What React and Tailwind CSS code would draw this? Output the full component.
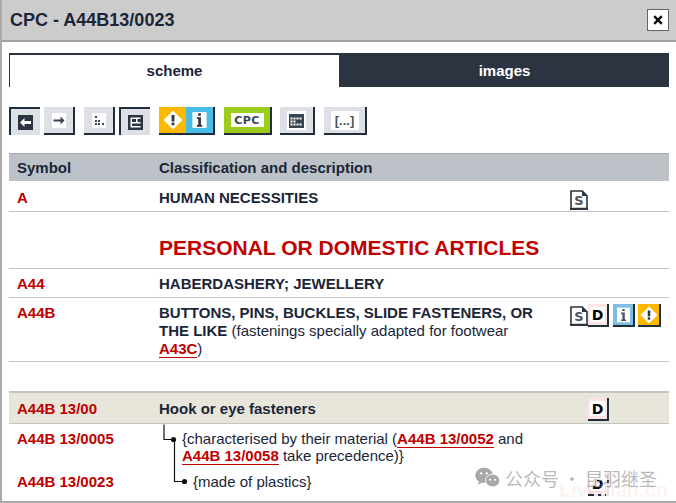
const font = { fontFamily: '"Liberation Sans", Arial, sans-serif' };

const ToolButton = ({ active, className = "", children }) => (
  <div
    className={`flex items-center justify-center h-[28px] bg-[#dde0e4] border-[#1f2d3d] ${
      active ? "border-t-2 border-l-2" : "border-b-2 border-r-2"
    } ${className}`}
  >
    {children}
  </div>
);

const Warn = ({ size = 20 }) => (
  <svg width={size} height={size} viewBox="0 0 20 20">
    <path d="M10 0.5 L19.5 10 L10 19.5 L0.5 10 Z" fill="#fff" />
    <rect x="8.6" y="5" width="2.8" height="6.5" fill="#2b3440" />
    <rect x="8.6" y="12.6" width="2.8" height="2.6" fill="#2b3440" />
  </svg>
);

const InfoGlyph = ({ w = 15, h = 16, fill = "#2b3440" }) => (
  <svg width={w} height={h} viewBox="0 0 16 18">
    <rect width="16" height="18" fill="#fff" />
    <path d="M6.5 1.5h3v2.6h-3zM5 6h4.6v8.5H11v2H5v-2h1.6V8H5z" fill={fill} />
  </svg>
);

const DocS = () => (
  <svg width="18" height="20" viewBox="0 0 18 20" className="block">
    <path d="M1 1h11l5 5v12.5H1z" fill="#fff" stroke="#2b3440" strokeWidth="1.6" />
    <path d="M12 0l6 6h-6z" fill="#2b3440" />
    <rect x="0" y="18" width="18" height="2" fill="#2b3440" />
    <text x="9" y="15" textAnchor="middle" fontSize="13" fontWeight="700" fill="#4a5560" style={{ fontFamily: '"DejaVu Sans", sans-serif' }}>S</text>
  </svg>
);

const DocD = ({ className = "" }) => (
  <div className={`flex items-center justify-center w-[21px] h-[23px] bg-[#fde3e3] border-b-2 border-r-2 border-[#1f2d3d] ${className}`}>
    <div className="flex items-center justify-center w-[15px] h-[15px] bg-white text-[14px] font-bold text-black leading-none" style={{ fontFamily: '"DejaVu Sans", sans-serif' }}>D</div>
  </div>
);

const SmallInfo = () => (
  <div className="flex items-center justify-center w-[22px] h-[23px] bg-[#7dbfe0] border-b-2 border-r-2 border-[#1f2d3d]">
    <InfoGlyph w={13} h={16} fill="#4a5560" />
  </div>
);

const SmallWarn = () => (
  <div className="flex items-center justify-center w-[23px] h-[23px] bg-[#ffb800] border-b-2 border-r-2 border-[#1f2d3d]">
    <Warn size={18} />
  </div>
);

const Row = ({ symbol, className = "", icons, iconsClass = "", children }) => (
  <div className={`flex border-b border-[#c4c4c4] ${className}`}>
    <div className="w-[150px] shrink-0 pl-[8px] font-bold text-[#c00000]">{symbol}</div>
    <div className="w-[411px] shrink-0 text-[#1a2638]">{children}</div>
    <div className={`flex-1 flex items-start ${iconsClass}`}>{icons}</div>
  </div>
);

const Ref = ({ children }) => (
  <a className="font-bold text-[#c00000] border-b border-[#c00000]">{children}</a>
);

export default function App() {
  return (
    <div className="relative w-[676px] h-[503px] overflow-hidden bg-white border-l-2 border-b-2 border-[#aaaaaa] text-[15px] leading-[17px]" style={font}>
      {/* title bar */}
      <div className="flex items-center justify-between h-[42px] -ml-[2px] pl-[8px] pr-[7px] bg-[#cccccc] border-b-2 border-l-2 border-[#a0a0a0]">
        <h1 className="text-[18px] font-bold text-[#1a2638]">CPC - A44B13/0023</h1>
        <div className="flex items-center justify-center w-[22px] h-[22px] bg-white border border-[#666]">
          <svg width="10" height="10" viewBox="0 0 10 10">
            <path d="M1.2 1.2l7.6 7.6M8.8 1.2l-7.6 7.6" stroke="#111" strokeWidth="2.4" />
          </svg>
        </div>
      </div>

      <div className="pl-[7px] pr-[7px]">
        {/* tabs */}
        <div className="flex mt-[11px] h-[34px] font-bold">
          <div className="flex-1 flex items-center justify-center bg-white border-t-2 border-x border-[#2b3440] text-[#1a2638] pb-[2px]">scheme</div>
          <div className="flex-1 flex items-center justify-center bg-[#2b3440] text-white">images</div>
        </div>

        {/* toolbar */}
        <div className="flex mt-[20px] h-[28px]">
          <ToolButton active className="w-[31px]">
            <svg width="15" height="15" viewBox="0 0 15 15">
              <rect width="15" height="15" fill="#2b3440" />
              <path d="M2 7.500l4.500-4.500v3h6.500v3H6.500v3z" fill="#fff" />
            </svg>
          </ToolButton>
          <ToolButton className="w-[31px] ml-[4px]">
            <svg width="14" height="15" viewBox="0 0 14 15">
              <rect width="14" height="15" fill="#fff" />
              <path d="M1.500 6.500h7V3.500l4 4-4 4V8.500h-7z" fill="#3a4552" />
            </svg>
          </ToolButton>
          <ToolButton className="w-[31px] ml-[9px]">
            <svg width="14" height="15" viewBox="0 0 14 15">
              <rect width="14" height="15" fill="#fff" />
              <path d="M3 3h2v2H3zM3 7h2v2H3zM6 7h2v2H6zM3 10h2v2H3zM6 10h2v2H6zM10 10h2v2h-2z" fill="#3a4552" />
            </svg>
          </ToolButton>
          <ToolButton active className="w-[31px] ml-[4px]">
            <svg width="15" height="15" viewBox="0 0 15 15">
              <rect width="15" height="15" fill="#2b3440" />
              <path d="M2.500 2.500h10v1.500H4V7h8.500v1.500H4V11h8.500v1.500h-10z" fill="#fff" />
              <rect x="8" y="4" width="1.500" height="3" fill="#fff" />
            </svg>
          </ToolButton>
          <div className="flex ml-[9px] w-[56px] h-[28px] border-b-2 border-r-2 border-[#1f2d3d]">
            <div className="flex items-center justify-center w-[27px] bg-[#ffb800]"><Warn /></div>
            <div className="flex items-center justify-center flex-1 bg-[#47bde6]"><InfoGlyph /></div>
          </div>
          <div className="flex items-center justify-center ml-[9px] w-[48px] h-[28px] bg-[#9ccc1c] border-b-2 border-r-2 border-[#1f2d3d]">
            <div className="flex items-center justify-center w-[33px] h-[14px] bg-white text-[11px] font-bold text-[#3a4552] tracking-[0.5px]" style={{ fontFamily: '"DejaVu Sans", sans-serif' }}>CPC</div>
          </div>
          <ToolButton className="w-[35px] ml-[8px]">
            <svg width="19" height="19" viewBox="0 0 19 19">
              <rect width="19" height="19" fill="#fff" />
              <rect x="2" y="3" width="15" height="14" fill="#3a4552" />
              <path d="M3.500 6.500h2v2h-2zM6.500 6.500h2v2h-2zM9.500 6.500h2v2h-2zM12.500 6.500h2v2h-2zM3.500 9.500h2v2h-2zM6.500 9.500h2v2h-2zM3.500 12.500h2v2h-2zM6.500 12.500h2v2h-2zM9.500 12.500h2v2h-2zM12.500 12.500h2v2h-2z" fill="#fff" />
            </svg>
          </ToolButton>
          <ToolButton className="w-[43px] ml-[9px]">
            <div className="flex items-center justify-center w-[28px] h-[19px] bg-white font-bold text-[13px] text-[#4a5560]">[...]</div>
          </ToolButton>
        </div>

        {/* table */}
        <div className="mt-[18px]">
          <div className="flex items-center h-[28px] pb-[1px] bg-[#bcc2c7] border-t border-[#a5a9ad] font-bold text-[#1a2638]">
            <div className="w-[150px] pl-[8px]">Symbol</div>
            <div>Classification and description</div>
          </div>

          <Row symbol="A" className="h-[31px] pt-[8px]" iconsClass="pt-[1px]" icons={<DocS />}>
            <span className="font-bold">HUMAN NECESSITIES</span>
          </Row>

          <Row className="h-[57px] pt-[24px]">
            <span className="text-[21px] leading-[23px] font-bold text-[#c00000] whitespace-nowrap">PERSONAL OR DOMESTIC ARTICLES</span>
          </Row>

          <Row symbol="A44" className="h-[29px] pt-[6px]">
            <span className="font-bold">HABERDASHERY; JEWELLERY</span>
          </Row>

          <Row
            symbol="A44B"
            className="h-[64px] pt-[6px]"
            icons={
              <>
                <div className="mt-[2px]"><DocS /></div>
                <DocD />
                <div className="ml-[4px] flex gap-[3px]">
                  <SmallInfo />
                  <SmallWarn />
                </div>
              </>
            }
          >
            <div className="leading-[18px] w-[385px]">
              <span className="font-bold">BUTTONS, PINS, BUCKLES, SLIDE FASTENERS, OR THE LIKE</span> (fastenings specially adapted for footwear <Ref>A43C</Ref>)
            </div>
          </Row>

          <div className="h-[31px] border-b-2 border-[#c4c4c4]" />

          <Row symbol="A44B 13/00" className="h-[31px] pt-[7px] bg-[#e8e6da]" iconsClass="pl-[18px] -mt-[2px]" icons={<DocD />}>
            <span className="font-bold">Hook or eye fasteners</span>
          </Row>

          <div className="relative flex h-[78px] text-[#1a2638]">
            <div className="w-[150px] pl-[8px] pt-[6px] font-bold text-[#c00000]">
              <div>A44B 13/0005</div>
              <div className="mt-[26px]">A44B 13/0023</div>
            </div>
            <div className="relative flex-1 pt-[6px] pl-[23px]">
              <div className="w-[360px]">
                {"{"}characterised by their material (<Ref>A44B 13/0052</Ref> and <Ref>A44B 13/0058</Ref> take precedence)}
              </div>
              <div className="mt-[9px] pl-[11px]">{"{"}made of plastics}</div>
              {/* tree lines */}
              <svg width="40" height="70" className="absolute left-[3px] top-0">
                <path d="M2 0.5V15.5H11M12.500 15.5V57.5H21" fill="none" stroke="#111" strokeWidth="1.2" />
                <circle cx="11.500" cy="15.5" r="2.6" fill="#111" />
                <circle cx="22.500" cy="57.5" r="2.6" fill="#111" />
              </svg>
            </div>
            <div className="absolute left-[579px] top-[49px] h-[26px] overflow-hidden">
              <DocD />
            </div>
          </div>
        </div>
      </div>

      {/* watermark washes out part of the D icon */}
      <div className="absolute left-[587px] top-[472px] w-[8px] h-[14px] bg-white/90" />
      <div className="absolute left-[595px] top-[472px] w-[14px] h-[8px] bg-white/80" />
      <div className="absolute left-[604px] top-[483px] w-[5px] h-[13px] bg-white/90" />
      <div className="absolute left-[592px] top-[493px] w-[4px] h-[3px] bg-white/90" />
      <div className="absolute left-[599px] top-[493px] w-[4px] h-[3px] bg-white/90" />

      <div className="absolute left-[472px] top-[466px] flex items-center gap-[4px] text-[18px] leading-[24px] text-[#888888]/60 whitespace-nowrap" style={{ fontFamily: '"Noto Sans CJK SC", sans-serif' }}>
        <svg width="27" height="22" viewBox="0 0 30 26">
          <ellipse cx="11" cy="10" rx="10.5" ry="9" fill="#a8a8a8" />
          <path d="M5 16l-1 5 5-3z" fill="#a8a8a8" />
          <ellipse cx="21" cy="16" rx="8.5" ry="7.5" fill="#a8a8a8" stroke="#fff" strokeWidth="1" />
          <circle cx="7.5" cy="7.5" r="1.4" fill="#fff" />
          <circle cx="14" cy="7.5" r="1.4" fill="#fff" />
          <circle cx="18" cy="15" r="1.2" fill="#fff" />
          <circle cx="24" cy="15" r="1.2" fill="#fff" />
        </svg>
        <span>公众号 · 昆羽继圣</span>
      </div>
      <div className="absolute left-[557px] top-[478px] text-[20px] leading-[24px] font-bold text-[#c00000]/5 whitespace-nowrap">LiveJian.cn</div>
    </div>
  );
}
